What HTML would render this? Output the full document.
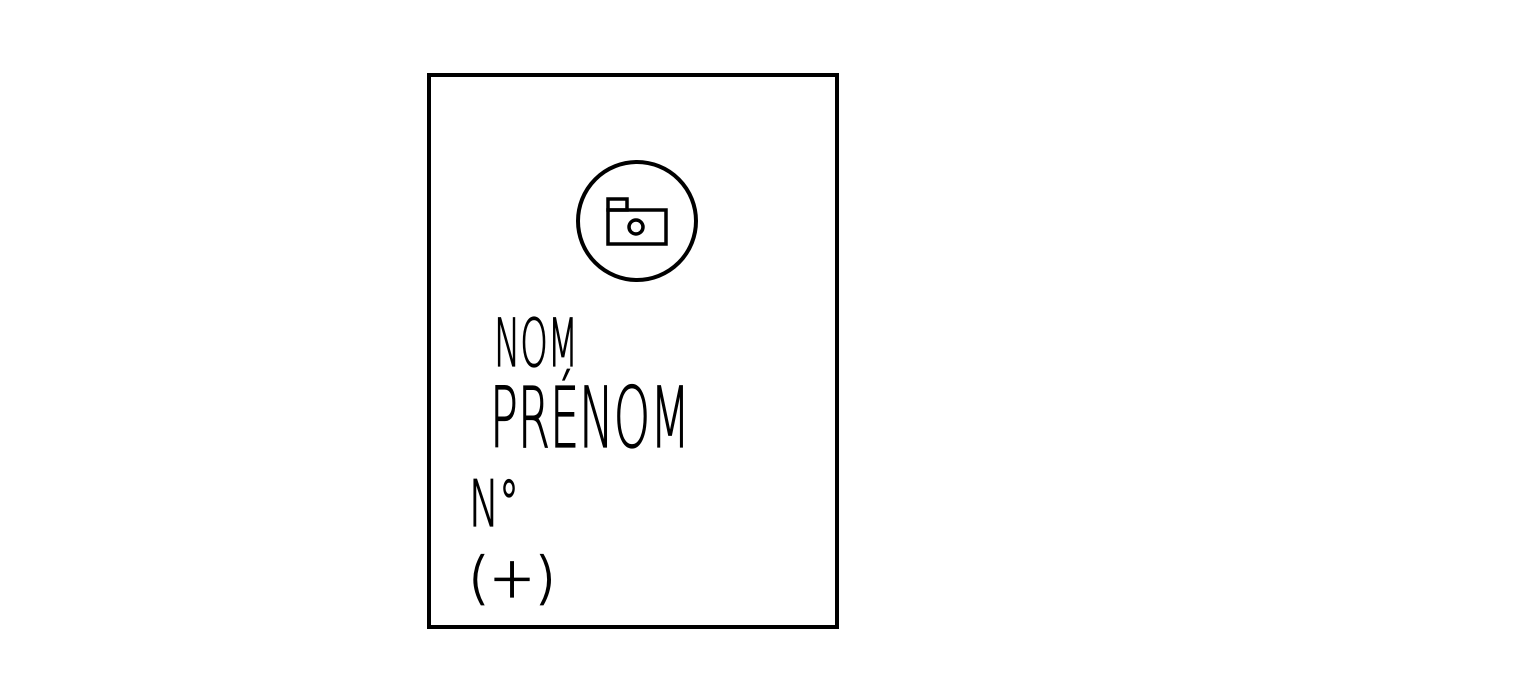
<!DOCTYPE html>
<html><head><meta charset="utf-8"><style>
html,body{margin:0;padding:0;background:#fff;width:1518px;height:686px;overflow:hidden}
svg{display:block}
text{font-family:"DejaVu Sans","Liberation Sans",sans-serif;font-weight:200;fill:#000;stroke:#000;stroke-width:1.3}
</style></head><body>
<svg width="1518" height="686" viewBox="0 0 1518 686">
<rect x="429" y="75" width="408" height="552" fill="none" stroke="#000" stroke-width="4"/>
<circle cx="637" cy="221" r="59" fill="none" stroke="#000" stroke-width="4"/>
<rect x="608" y="199" width="19" height="11" fill="none" stroke="#000" stroke-width="3.5"/>
<rect x="608" y="210" width="58" height="34" fill="none" stroke="#000" stroke-width="3.5"/>
<circle cx="636" cy="227" r="7" fill="none" stroke="#000" stroke-width="3.5"/>
<text x="494" y="366" font-size="66" textLength="84" lengthAdjust="spacingAndGlyphs">NOM</text>
<text x="490" y="447" font-size="84" textLength="200" lengthAdjust="spacingAndGlyphs">PRÉNOM</text>
<text x="469" y="526" font-size="64" textLength="50" lengthAdjust="spacingAndGlyphs">N°</text>
<text x="468" y="597" font-size="56" textLength="88" lengthAdjust="spacingAndGlyphs">(+)</text>
</svg>
</body></html>
